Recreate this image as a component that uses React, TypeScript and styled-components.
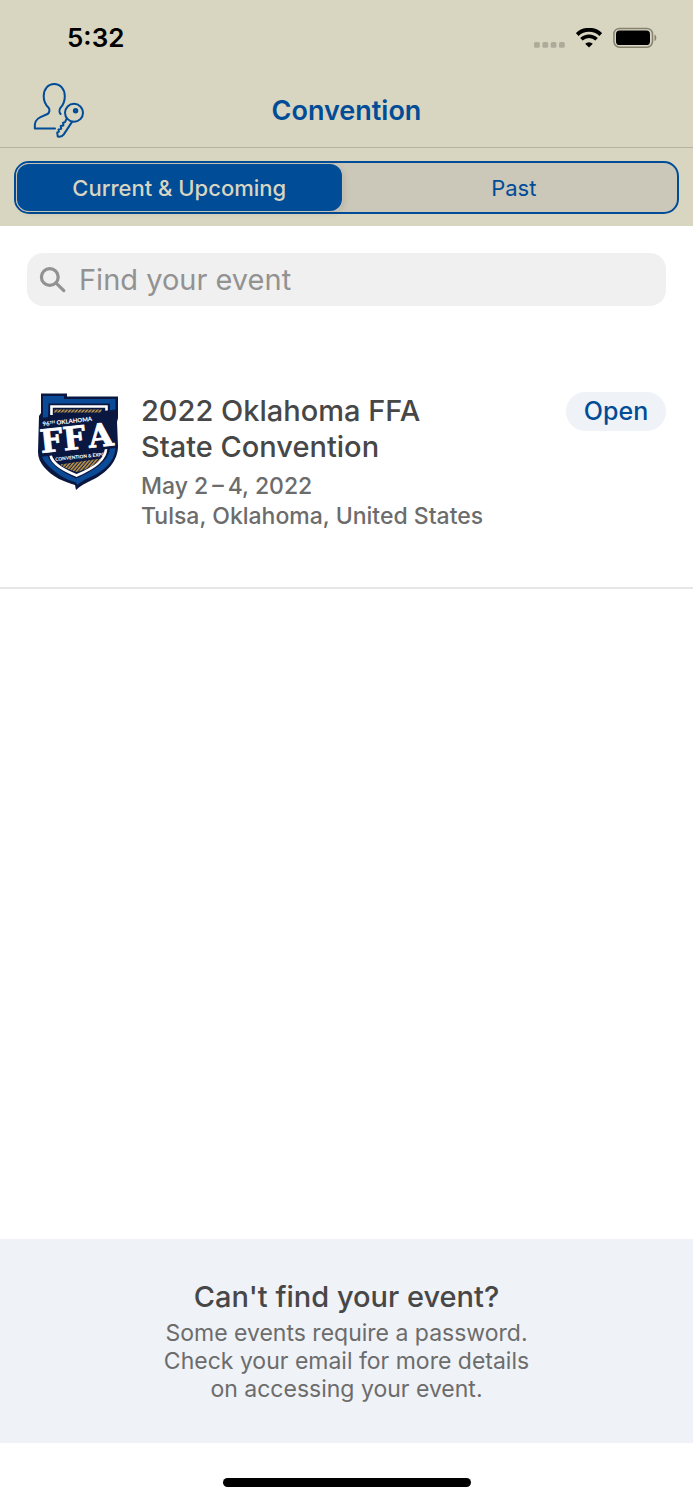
import React, { useState } from "react";
import styled, { createGlobalStyle } from "styled-components";

const blue = "#004c97";
const sand = "#d8d5c1";
const ink = "#474747";
const muted = "#6c6c6c";
const mist = "#eff2f7";

const GlobalStyle = createGlobalStyle`
  *, *::before, *::after { box-sizing: border-box; }
  body { margin: 0; background: #fff; font-family: Inter, "Liberation Sans", sans-serif; }
  button, input { font: inherit; }
  svg { flex-shrink: 0; }
`;

const Screen = styled.div`
  display: flex;
  flex-direction: column;
  min-height: 100vh;
`;

const Header = styled.header`
  background: ${sand};
`;

const StatusBar = styled.div`
  display: flex;
  align-items: center;
  justify-content: space-between;
  height: 76px;
  padding: 0 36px 0 67px;
`;

const Clock = styled.time`
  font-size: 26px;
  font-weight: 600;
  line-height: 32px;
  color: #000;
`;

const StatusIcons = styled.div`
  display: flex;
  align-items: center;
  gap: 11px;
`;

const NavBar = styled.div`
  display: grid;
  grid-template-columns: 1fr auto 1fr;
  align-items: center;
  height: 72px;
  padding: 0 32px 1px;
  border-bottom: 1px solid #b5b2a3;
`;

const IconButton = styled.button`
  display: flex;
  justify-self: start;
  padding: 0;
  border: 0;
  background: none;
  color: ${blue};
`;

const NavTitle = styled.h1`
  margin: 0;
  font-size: 27px;
  font-weight: 600;
  line-height: 36px;
  color: ${blue};
`;

const TabRow = styled.div`
  padding: 13px 14px 12px;
`;

const Segments = styled.div`
  display: grid;
  grid-template-columns: 1fr 1fr;
  gap: 10px;
  height: 53px;
  padding: 1px;
  border: 2px solid ${blue};
  border-radius: 15px;
  background: #cbc7b9;
`;

const Segment = styled.button<{ $active: boolean }>`
  padding: 0;
  border: 0;
  border-radius: 12px;
  font-size: 22px;
  font-weight: ${(p) => (p.$active ? 500 : 400)};
  line-height: 28px;
  color: ${(p) => (p.$active ? sand : blue)};
  background: ${(p) => (p.$active ? blue : "transparent")};
  box-shadow: ${(p) => (p.$active ? "0 0 0 1px #c4c2b4, 2px 2px 6px rgba(0, 0, 0, 0.1)" : "none")};
`;

const Main = styled.main`
  flex: 1;
`;

const SearchBox = styled.label`
  display: flex;
  align-items: center;
  gap: 12px;
  height: 53px;
  margin: 27px 27px 0;
  padding: 0 12px;
  border-radius: 16px;
  background: #f0f0f0;
  color: #929292;
`;

const SearchInput = styled.input`
  flex: 1;
  min-width: 0;
  padding: 0;
  border: 0;
  outline: 0;
  background: none;
  font-size: 29px;
  line-height: 36px;
  color: ${ink};
  &::placeholder { color: #929292; opacity: 1; }
`;

const EventList = styled.ul`
  margin: 85px 0 0;
  padding: 0;
  list-style: none;
`;

const EventRow = styled.li`
  display: flex;
  align-items: flex-start;
  padding: 0 27px 56px 36px;
  border-bottom: 2px solid #e6e6e6;
`;

const EventText = styled.div`
  flex: 1;
  min-width: 0;
  padding: 2px 20px 0 19px;
`;

const EventTitle = styled.h2`
  max-width: 320px;
  margin: 0 0 6px;
  font-size: 29px;
  font-weight: 500;
  line-height: 36px;
  color: ${ink};
`;

const EventDetail = styled.p`
  margin: 0;
  font-size: 23px;
  font-weight: 500;
  line-height: 30px;
  color: ${muted};
`;

const OpenButton = styled.button`
  flex-shrink: 0;
  width: 100px;
  height: 39px;
  margin-top: 1px;
  padding: 0 0 2px;
  border: 0;
  border-radius: 20px;
  background: ${mist};
  font-size: 25px;
  font-weight: 500;
  line-height: 30px;
  color: ${blue};
`;

const Help = styled.section`
  padding: 40px 24px;
  background: ${mist};
  text-align: center;
`;

const HelpTitle = styled.h2`
  margin: 0 0 4px;
  font-size: 29px;
  font-weight: 500;
  line-height: 36px;
  color: ${ink};
`;

const HelpText = styled.p`
  max-width: 380px;
  margin: 0 auto;
  font-size: 23px;
  line-height: 28px;
  color: ${muted};
`;

const HomeArea = styled.div`
  display: flex;
  justify-content: center;
  align-items: flex-end;
  height: 57px;
  padding-bottom: 13px;
`;

const HomeIndicator = styled.div`
  width: 248px;
  height: 9px;
  border-radius: 5px;
  background: #000;
`;

const SignalDots = () => (
  <svg width="31" height="24" viewBox="0 0 31 24" fill="#aeab9b" aria-hidden="true">
    {[0, 8.4, 16.7, 25].map((x) => (
      <rect key={x} x={x} y="16" width="5.8" height="5.8" rx="1.6" />
    ))}
  </svg>
);

const Wifi = () => (
  <svg width="26" height="20" viewBox="0 0 26 20" fill="none" stroke="#000" aria-hidden="true">
    <path d="M1.2 6.5a17.2 17.2 0 0 1 23.6 0" strokeWidth="4" />
    <path d="M5.4 11.3a11 11 0 0 1 15.2 0" strokeWidth="3.6" />
    <path d="M13 19.6 9.2 15.8a5.5 5.5 0 0 1 7.600 0z" fill="#000" stroke="none" />
  </svg>
);

const Battery = () => (
  <svg width="44" height="22" viewBox="0 0 44 22" aria-hidden="true">
    <rect x="0.9" y="1.4" width="38.6" height="18.8" rx="5.6" fill="none" stroke="#84826f" strokeWidth="1.5" />
    <rect x="3" y="3.6" width="34" height="14.4" rx="3.6" />
    <path d="M41.5 7.600c2.400 1 2.400 5.600 0 6.600z" fill="#84826f" />
  </svg>
);

const UserKey = () => (
  <svg width="54" height="58" viewBox="0 1 54 58" fill="none" stroke="currentColor" strokeWidth="2" strokeLinecap="round" strokeLinejoin="round" aria-hidden="true">
    <path d="M23 47.500H2.800C2 40.500 4.500 38 8.500 36.200L15.500 33C17.500 32 18 28.800 16.800 27C13.500 23.800 11.700 19.500 11.700 15.200C11.700 8 16.200 3 22.200 3S32.800 8 32.800 15.200C32.800 19.800 31.200 23.800 28.600 26.600C27 28.800 27.300 31.600 28.600 33" />
    <circle cx="42" cy="31.800" r="9" />
    <circle cx="43.600" cy="29.800" r="1.500" strokeWidth="2.400" />
    <path d="M34.800 37.300 33 41.200l-2 .5.400 2.800-2.700.600.500 2.700-2.700.6.400 2.300-1.700.8.600 4.100c2.800.5 4.800-.5 6-2.200L40 40.900" />
  </svg>
);

const SearchGlyph = () => (
  <svg width="28" height="28" viewBox="0 0 28 28" fill="none" stroke="currentColor" strokeWidth="3.200" strokeLinecap="round" aria-hidden="true">
    <circle cx="10.800" cy="11" r="8.400" />
    <path d="M17.400 17.400 24.800 24.600" />
  </svg>
);

const Crest = () => (
  <svg width="86" height="102" viewBox="6 11 86 102" role="img" aria-label="96th Oklahoma FFA Convention and Expo">
    <defs>
      <pattern id="stripes" width="2.600" height="4" patternUnits="userSpaceOnUse" patternTransform="rotate(40)">
        <rect width="2.600" height="4" fill="#1c2040" />
        <rect width="1.500" height="4" fill="#c09a4b" />
      </pattern>
    </defs>
    <path d="M11 13.500H37V16.500H88V38L87 42 88 66C88 81 77 93 62 100C55 103.500 50 106 46 110L45 105C38 103 34 101 29 99C17 92 8 83 8 72L9 36 11 33Z" fill="#0a1740" />
    <path d="M13 16H34V19H85.500V66c0 15-11 25-26 31.500-5 2-9 4.500-12 7.500L46 102.500c-6-2-10-3.500-15-6.500C19.500 88 11 80 11 72L13 34z" fill="#0b4a96" />
    <path d="M18.500 23.500H80V68C79 81 65 90 46 98.500 31 91.500 18 83 17 73z" fill="#0a1740" />
    <path d="M21.500 35V26.500H76.500V38M20.500 75C22 84 34 90 46.500 95.500 61 89.500 75.500 81 76 69" fill="none" stroke="#fff" strokeWidth="2.600" />
    <path d="M10 38 86 29.500 86 68 9.500 77z" fill="#0a1740" />
    <path d="M24 29.500h48l-1 3H24z" fill="url(#stripes)" />
    <path d="M30 84.500 71 78.500C67 85 57 89 47 92 40 90 34 88 30 84.500z" fill="url(#stripes)" />
    <g transform="rotate(-6 48 60)" fill="#fff">
      <text x="14.500" y="42.500" fontFamily="Lato, sans-serif" fontWeight="900" fontSize="6">96<tspan fontSize="4" dy="-1.500">TH</tspan><tspan dy="1.500"> OKLAHOMA</tspan></text>
      <text x="10 33 58.500" y="69" fontFamily="DejaVu Serif, serif" fontWeight="700" fontSize="32" stroke="#fff" strokeWidth="0.800">FFA</text>
      <text x="23.500" y="78.500" fontFamily="Lato, sans-serif" fontWeight="900" fontSize="4.700">CONVENTION &amp; EXPO</text>
    </g>
  </svg>
);

const tabs = ["Current & Upcoming", "Past"];

export default function App() {
  const [tab, setTab] = useState(0);
  return (
    <>
      <GlobalStyle />
      <Screen>
        <Header>
          <StatusBar>
            <Clock>5:32</Clock>
            <StatusIcons>
              <SignalDots />
              <Wifi />
              <Battery />
            </StatusIcons>
          </StatusBar>
          <NavBar>
            <IconButton aria-label="Account access">
              <UserKey />
            </IconButton>
            <NavTitle>Convention</NavTitle>
          </NavBar>
          <TabRow>
            <Segments role="tablist">
              {tabs.map((name, i) => (
                <Segment key={name} role="tab" aria-selected={tab === i} $active={tab === i} onClick={() => setTab(i)}>
                  {name}
                </Segment>
              ))}
            </Segments>
          </TabRow>
        </Header>
        <Main>
          <SearchBox>
            <SearchGlyph />
            <SearchInput type="text" placeholder="Find your event" aria-label="Find your event" />
          </SearchBox>
          <EventList>
            <EventRow>
              <Crest />
              <EventText>
                <EventTitle>2022 Oklahoma FFA State Convention</EventTitle>
                <EventDetail>May 2&#8201;–&#8201;4, 2022</EventDetail>
                <EventDetail>Tulsa, Oklahoma, United States</EventDetail>
              </EventText>
              <OpenButton>Open</OpenButton>
            </EventRow>
          </EventList>
        </Main>
        <Help>
          <HelpTitle>Can't find your event?</HelpTitle>
          <HelpText>Some events require a password. Check your email for more details on accessing your event.</HelpText>
        </Help>
        <HomeArea>
          <HomeIndicator />
        </HomeArea>
      </Screen>
    </>
  );
}
